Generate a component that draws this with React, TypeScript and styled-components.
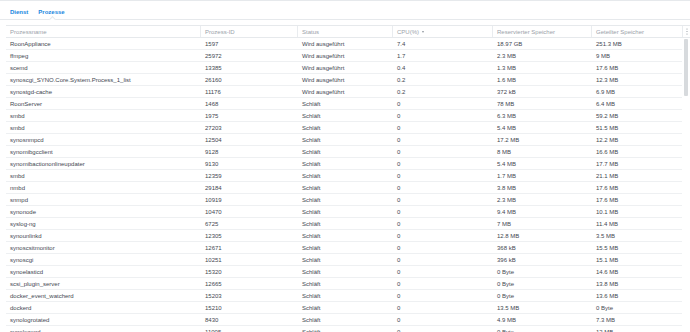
import styled, { createGlobalStyle } from "styled-components";

const GlobalStyle = createGlobalStyle`
  html, body {
    margin: 0;
    padding: 0;
    background: #fff;
    overflow: hidden;
  }
  body {
    font-family: "Liberation Sans", Arial, sans-serif;
    font-size: 6px;
    color: #414b55;
  }
`;

const Page = styled.div`
  height: 332px;
  overflow: hidden;
`;

const TabBar = styled.div`
  display: flex;
  gap: 10px;
  padding: 7px 0 3px 10px;
  border-top: 1px solid #e6e9ec;
  border-bottom: 1px solid #e6e9ec;
`;

const Tab = styled.div<{ $active?: boolean }>`
  position: relative;
  line-height: 8px;
  font-weight: bold;
  color: #1786e0;

  ${(p) =>
    p.$active &&
    `
    &::after {
      content: "";
      position: absolute;
      left: 50%;
      bottom: -6px;
      width: 4px;
      height: 4px;
      margin-left: -2px;
      background: #fff;
      border-top: 1px solid #e6e9ec;
      border-left: 1px solid #e6e9ec;
      transform: rotate(45deg);
    }
  `}
`;

const columns = "195px 97px 95px 100px 99px 1fr";

const Grid = styled.div`
  margin: 5px 0 0 6px;
`;

const HeadRow = styled.div`
  display: grid;
  grid-template-columns: ${columns} 8px;
  border-top: 1px solid #e6e9ec;
  border-bottom: 1px solid #e6e9ec;
  height: 11px;
`;

const HeadCell = styled.div<{ $first?: boolean }>`
  display: flex;
  align-items: center;
  padding: 0 4px;
  color: #9aa2aa;
  white-space: nowrap;
  border-left: ${(p) => (p.$first ? "none" : "1px solid #e9ecef")};
  margin-left: ${(p) => (p.$first ? "0" : "-1px")};
`;

const MenuCell = styled.div`
  display: flex;
  align-items: center;
  justify-content: center;
  border-left: 1px solid #e9ecef;
`;

const SortArrow = styled.span`
  display: inline-block;
  margin-left: 3px;
  border-left: 1.5px solid transparent;
  border-right: 1.5px solid transparent;
  border-top: 2px solid #8d959d;
`;

const BodyArea = styled.div`
  display: flex;
`;

const Rows = styled.div`
  flex: 1;
`;

const Row = styled.div`
  display: grid;
  grid-template-columns: ${columns};
  height: 11px;
  border-bottom: 1px solid #eef0f2;
`;

const Cell = styled.div`
  display: flex;
  align-items: center;
  padding: 0 4px;
  white-space: nowrap;
  overflow: hidden;
  color: #3f4852;
`;

const ScrollTrack = styled.div`
  width: 8px;
  display: flex;
  justify-content: center;
`;

const Thumb = styled.div`
  width: 4px;
  height: 57px;
  margin-top: 1px;
  background: #d7dadd;
  border-radius: 1px;
`;

type Proc = [string, string, string, string, string, string];

const RUN = "Wird ausgeführt";
const SLEEP = "Schläft";

const procs: Proc[] = [
  ["RoonAppliance", "1597", RUN, "7.4", "18.97 GB", "251.3 MB"],
  ["ffmpeg", "25972", RUN, "1.7", "2.3 MB", "9 MB"],
  ["scemd", "13385", RUN, "0.4", "1.3 MB", "17.6 MB"],
  ["synoscgi_SYNO.Core.System.Process_1_list", "26160", RUN, "0.2", "1.6 MB", "12.3 MB"],
  ["synostgd-cache", "11176", RUN, "0.2", "372 kB", "6.9 MB"],
  ["RoonServer", "1468", SLEEP, "0", "78 MB", "6.4 MB"],
  ["smbd", "1975", SLEEP, "0", "6.3 MB", "59.2 MB"],
  ["smbd", "27203", SLEEP, "0", "5.4 MB", "51.5 MB"],
  ["synosnmpcd", "12504", SLEEP, "0", "17.2 MB", "12.2 MB"],
  ["synomibgcclient", "9128", SLEEP, "0", "8 MB", "16.6 MB"],
  ["synomibactiononlineupdater", "9130", SLEEP, "0", "5.4 MB", "17.7 MB"],
  ["smbd", "12359", SLEEP, "0", "1.7 MB", "21.1 MB"],
  ["nmbd", "29184", SLEEP, "0", "3.8 MB", "17.6 MB"],
  ["snmpd", "10919", SLEEP, "0", "2.3 MB", "17.6 MB"],
  ["synonode", "10470", SLEEP, "0", "9.4 MB", "10.1 MB"],
  ["syslog-ng", "6725", SLEEP, "0", "7 MB", "11.4 MB"],
  ["synounlinkd", "12305", SLEEP, "0", "12.8 MB", "3.5 MB"],
  ["synoscsitmonitor", "12671", SLEEP, "0", "368 kB", "15.5 MB"],
  ["synoscgi", "10251", SLEEP, "0", "396 kB", "15.1 MB"],
  ["synoelasticd", "15320", SLEEP, "0", "0 Byte", "14.6 MB"],
  ["scsi_plugin_server", "12665", SLEEP, "0", "0 Byte", "13.8 MB"],
  ["docker_event_watcherd", "15203", SLEEP, "0", "0 Byte", "13.6 MB"],
  ["dockerd", "15210", SLEEP, "0", "13.5 MB", "0 Byte"],
  ["synologrotated", "8430", SLEEP, "0", "4.9 MB", "7.3 MB"],
  ["synolegend", "11005", SLEEP, "0", "0 Byte", "12 MB"],
];

const MenuDots = () => (
  <svg width="2" height="7" viewBox="0 0 2 7">
    <circle cx="1" cy="1" r="0.6" fill="#8d959d" />
    <circle cx="1" cy="3.5" r="0.6" fill="#8d959d" />
    <circle cx="1" cy="6" r="0.6" fill="#8d959d" />
  </svg>
);

export default function App() {
  return (
    <Page>
      <GlobalStyle />
      <TabBar>
        <Tab>Dienst</Tab>
        <Tab $active>Prozesse</Tab>
      </TabBar>
      <Grid>
        <HeadRow>
          <HeadCell $first>Prozessname</HeadCell>
          <HeadCell>Prozess-ID</HeadCell>
          <HeadCell>Status</HeadCell>
          <HeadCell>
            CPU(%)
            <SortArrow />
          </HeadCell>
          <HeadCell>Reservierter Speicher</HeadCell>
          <HeadCell>Geteilter Speicher</HeadCell>
          <MenuCell>
            <MenuDots />
          </MenuCell>
        </HeadRow>
        <BodyArea>
          <Rows>
            {procs.map((p, i) => (
              <Row key={i}>
                {p.map((v, j) => (
                  <Cell key={j}>{v}</Cell>
                ))}
              </Row>
            ))}
          </Rows>
          <ScrollTrack>
            <Thumb />
          </ScrollTrack>
        </BodyArea>
      </Grid>
    </Page>
  );
}
